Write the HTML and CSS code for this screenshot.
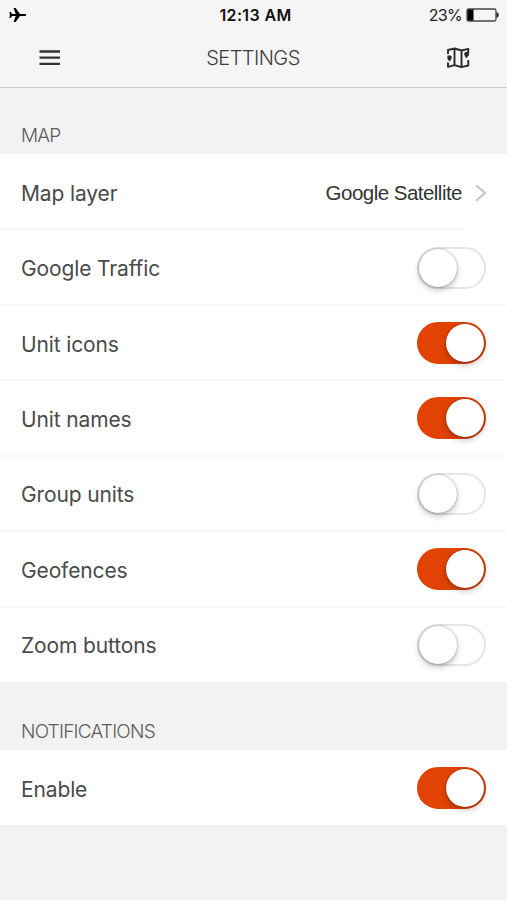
FILE: index.html
```
<!DOCTYPE html>
<html lang="en">
<head>
<meta charset="utf-8">
<title>Settings</title>
<link rel="stylesheet" href="styles.css">
</head>
<body>
<header class="header">
  <div class="status">
    <svg class="plane" width="18" height="16" viewBox="0 0 18 16"><path d="M17.200 8c0 .7-.6 1.100-1.500 1.100H11L6.600 15H4.600l2.100-5.900H3.200L1.800 11H.4l.5-3-.5-3h1.400l1.400 1.900h3.500L4.600 1h2L11 6.900h4.700c.9 0 1.500.4 1.500 1.100z"/></svg>
    <span class="time">12:13 AM</span>
    <span class="battery"><span class="percent">23%</span>
      <svg width="33" height="14" viewBox="0 0 33 14"><rect x="1" y="1" width="29" height="12" rx="1.800" fill="none" stroke="#444" stroke-width="1.300"/><rect x="1.500" y="1.500" width="6" height="11" fill="#000"/><path d="M30.500 4.300c1.800.4 2.200 1.500 2.200 2.700s-.4 2.300-2.200 2.700z" fill="#222"/></svg>
    </span>
  </div>
  <nav class="nav">
    <svg class="menu" width="22" height="18" viewBox="0 0 22 18"><path d="M.5 2.500H21M.5 8.700H21M.5 14.800H21" stroke="#333" stroke-width="2.300"/></svg>
    <h1 class="title">SETTINGS</h1>
    <svg class="map" width="26" height="22" viewBox="0 0 26 22" fill="none" stroke="#2a2a2a" stroke-width="1.900" stroke-linejoin="round"><path d="M3 7V3L9.500 1.500l7 2 6.800-1.700v4M3 15.500v4.300l6.500-1.600 7 2 6.800-1.700V13M9.500 1.500v16.700M16.500 3.500v16.700"/><path d="M2.400 8.700c1.300-1 4.400-.6 4.400 1.600 0 1.500-1.200 2.200-1.900 4.500-.5-1-1.700-1.800-2.500-2.800zM23.900 5.300c-1.500-1-4.700-.5-4.700 1.700 0 1.500 1.200 2.200 1.900 4.500.6-1.200 2-2 2.800-3z" fill="#2a2a2a" stroke="none"/></svg>
  </nav>
</header>
<main>
  <h2 class="heading">MAP</h2>
  <section class="group">
    <div class="row link"><span class="label">Map layer</span><span class="value">Google Satellite</span><svg class="chevron" width="12" height="18" viewBox="0 0 12 18"><path d="M1.200 1.200 10 9l-8.800 7.800" fill="none" stroke="#c4c4c4" stroke-width="2"/></svg></div>
    <div class="row"><span class="label">Google Traffic</span><span class="switch"></span></div>
    <div class="row"><span class="label">Unit icons</span><span class="switch on"></span></div>
    <div class="row"><span class="label">Unit names</span><span class="switch on"></span></div>
    <div class="row"><span class="label">Group units</span><span class="switch"></span></div>
    <div class="row"><span class="label">Geofences</span><span class="switch on"></span></div>
    <div class="row"><span class="label">Zoom buttons</span><span class="switch"></span></div>
  </section>
  <h2 class="heading second">NOTIFICATIONS</h2>
  <section class="group">
    <div class="row"><span class="label">Enable</span><span class="switch on"></span></div>
  </section>
</main>
</body>
</html>
```
FILE: styles.css
```
* { box-sizing: border-box; }
body {
  margin: 0;
  height: 900px;
  overflow: hidden;
  background: #f2f2f2;
  color: #4a4a4a;
  font-family: Inter, "Liberation Sans", sans-serif;
}
svg { display: block; flex: none; }
.header {
  height: 88px;
  background: #f5f5f5;
  border-bottom: 1px solid #cdcdcd;
}
.status {
  height: 30px;
  padding: 0 8px 0 9px;
  display: grid;
  grid-template-columns: 1fr auto 1fr;
  align-items: center;
  color: #111;
}
.plane { margin-top: -1px; }
.time { font-size: 16px; font-weight: 600; letter-spacing: 0.35px; margin-left: 3px; }
.battery { display: flex; align-items: center; justify-content: flex-end; gap: 4px; }
.percent { font-size: 16px; letter-spacing: -0.700px; color: #222; }
.nav {
  height: 56px;
  padding: 0 36px 0 39px;
  display: grid;
  grid-template-columns: 1fr auto 1fr;
  align-items: center;
}
.map { justify-self: end; }
.title {
  margin: 0 0 0 -4px;
  font-size: 20px;
  font-weight: 300;
  letter-spacing: -0.550px;
  color: #3c3c3c;
}
.heading {
  margin: 0;
  height: 66px;
  padding: 36px 21px 0;
  font-size: 19px;
  line-height: 24px;
  font-weight: 300;
  letter-spacing: -0.780px;
  color: #5c5c5c;
}
.heading.second { height: 68px; padding-top: 38px; }
.group { background: #fff; }
.row {
  height: 75.430px;
  padding: 0 21px;
  display: flex;
  align-items: center;
  position: relative;
}
.row:not(:last-child)::after {
  content: "";
  position: absolute;
  left: 0;
  right: 0;
  bottom: -1px;
  height: 2px;
  background: #f8f8f8;
}
.row.link::after { right: 43px !important; }
.label { flex: 1; font-size: 21px; line-height: 30px; padding-top: 4px; letter-spacing: -0.130px; }
.value {
  font-family: "Liberation Sans", sans-serif;
  font-size: 20.500px;
  letter-spacing: -0.520px;
  color: #333;
  margin-right: 13px;
  padding-top: 3px;
}
.chevron { margin-right: -1px; margin-top: 3px; }
.switch {
  width: 69px;
  height: 42px;
  margin-top: 1px;
  padding: 1px;
  display: flex;
  align-items: center;
  border: 2px solid #e5e5e5;
  border-radius: 21px;
  background: #fff;
}
.switch::before {
  content: "";
  width: 38px;
  height: 38px;
  margin-left: -1px;
  border-radius: 50%;
  background: #fff;
  box-shadow: 0 0 2px rgba(0, 0, 0, .35), 0 3px 6px rgba(0, 0, 0, .25);
}
.switch.on {
  background: #e24304;
  border-color: #e24304;
  justify-content: flex-end;
}
.switch.on::before { margin-right: -1px; }
```
